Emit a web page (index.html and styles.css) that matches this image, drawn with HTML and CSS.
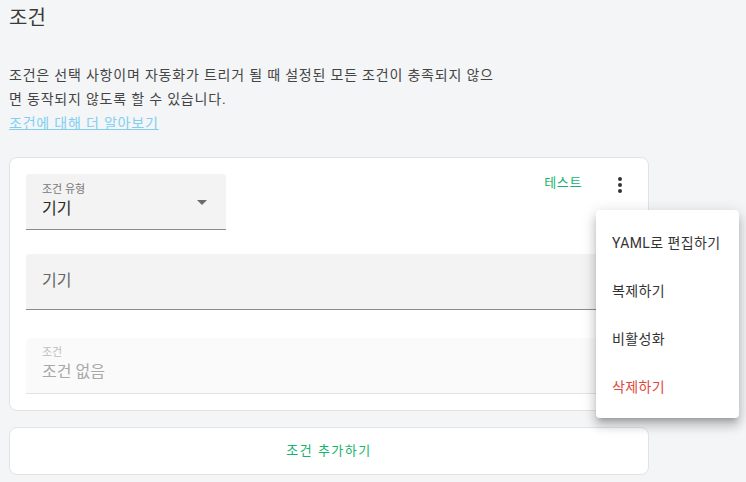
FILE: index.html
```html
<!DOCTYPE html>
<html lang="ko">
<head>
<meta charset="utf-8">
<link rel="stylesheet" href="styles.css">
</head>
<body>
<div class="page">
  <h2 class="title">조건</h2>
  <p class="intro">조건은 선택 사항이며 자동화가 트리거 될 때 설정된 모든 조건이 충족되지 않으<br>면 동작되지 않도록 할 수 있습니다.<br><a class="learn" href="#">조건에 대해 더 알아보기</a></p>

  <div class="card">
    <div class="card-head">
      <div class="select">
        <div class="field-label">조건 유형</div>
        <div class="field-value">기기</div>
        <svg class="arrow" viewBox="0 0 24 24" width="24" height="24"><path d="M7,10L12,15L17,10H7Z" fill="#6b6b6b"/></svg>
      </div>
      <div class="actions">
        <span class="btn-text">테스트</span>
        <svg class="dots" viewBox="0 0 24 24" width="24" height="24"><path d="M12,16A2,2 0 0,1 14,18A2,2 0 0,1 12,20A2,2 0 0,1 10,18A2,2 0 0,1 12,16M12,10A2,2 0 0,1 14,12A2,2 0 0,1 12,14A2,2 0 0,1 10,12A2,2 0 0,1 12,10M12,4A2,2 0 0,1 14,6A2,2 0 0,1 12,8A2,2 0 0,1 10,6A2,2 0 0,1 12,4Z" fill="#333"/></svg>
      </div>
    </div>
    <div class="field device">
      <div class="placeholder">기기</div>
    </div>
    <div class="field disabled">
      <div class="field-label">조건</div>
      <div class="field-value">조건 없음</div>
    </div>
  </div>

  <div class="card add-card">
    <span class="btn-text">조건 추가하기</span>
  </div>

  <div class="menu">
    <div class="menu-item">YAML로 편집하기</div>
    <div class="menu-item">복제하기</div>
    <div class="menu-item">비활성화</div>
    <div class="menu-item danger">삭제하기</div>
  </div>
</div>
</body>
</html>
```

FILE: styles.css
```css
* { box-sizing: border-box; }
html, body {
  margin: 0;
  padding: 0;
  background: #f4f5f7;
  font-family: Roboto, "Noto Sans CJK KR", sans-serif;
  color: #333;
}
.page {
  position: relative;
  width: 746px;
  height: 482px;
  padding: 4px 0 0 9px;
  overflow: hidden;
}
.title {
  margin: 0;
  font-size: 20px;
  line-height: 28px;
  font-weight: 400;
  color: #3a3a3a;
}
.intro {
  margin: 31px 0 0;
  font-size: 14px;
  line-height: 24px;
  letter-spacing: 0.8px;
  color: #444;
  white-space: nowrap;
}
.learn {
  color: #80cff2;
  text-decoration: underline;
}
.card {
  width: 640px;
  background: #fff;
  border: 1px solid #e3e3e3;
  border-radius: 8px;
  margin-top: 22px;
  padding: 16px;
}
.card-head {
  display: flex;
  align-items: flex-start;
  justify-content: space-between;
  height: 56px;
}
.select {
  position: relative;
  width: 200px;
  height: 56px;
  background: #f3f3f3;
  border-radius: 4px 4px 0 0;
  border-bottom: 1px solid #8c8c8c;
  padding: 9px 16px 0;
}
.field-label {
  font-size: 11px;
  line-height: 14px;
  color: #777;
}
.field-value {
  font-size: 16px;
  line-height: 24px;
  color: #2a2a2a;
}
.arrow {
  position: absolute;
  right: 12px;
  top: 16px;
}
.actions {
  display: flex;
  align-items: flex-start;
  margin-top: -1px;
}
.btn-text {
  font-size: 13px;
  line-height: 20px;
  letter-spacing: 0.6px;
  color: #16b36c;
}
.actions .btn-text { margin-right: 26px; }
.dots { display: block; }
.field {
  height: 56px;
  border-radius: 4px 4px 0 0;
}
.device {
  margin-top: 24px;
  background: #f3f3f3;
  border-bottom: 1px solid #8c8c8c;
  padding: 15px 16px 0;
}
.placeholder {
  font-size: 16px;
  line-height: 24px;
  color: #666;
}
.disabled {
  margin-top: 28px;
  background: #fafafa;
  border-bottom: 1px solid #e2e2e2;
  padding: 8px 16px 0;
}
.disabled .field-label { color: #bdbdbd; }
.disabled .field-value { color: #a8a8a8; }
.add-card {
  margin-top: 16px;
  height: 48px;
  padding: 0;
  display: flex;
  align-items: center;
  justify-content: center;
}
.add-card .btn-text { letter-spacing: 1.5px; }
.menu {
  position: absolute;
  left: 596px;
  top: 210px;
  width: 143px;
  padding: 8px 0;
  background: #fff;
  border-radius: 4px;
  box-shadow: 0 5px 5px -3px rgba(0,0,0,.2), 0 8px 10px 1px rgba(0,0,0,.14), 0 3px 14px 2px rgba(0,0,0,.12);
}
.menu-item {
  height: 48px;
  display: flex;
  align-items: center;
  padding-left: 16px;
  font-size: 14px;
  letter-spacing: 0.4px;
  color: #333;
}
.menu-item.danger { color: #e0483b; }
```
